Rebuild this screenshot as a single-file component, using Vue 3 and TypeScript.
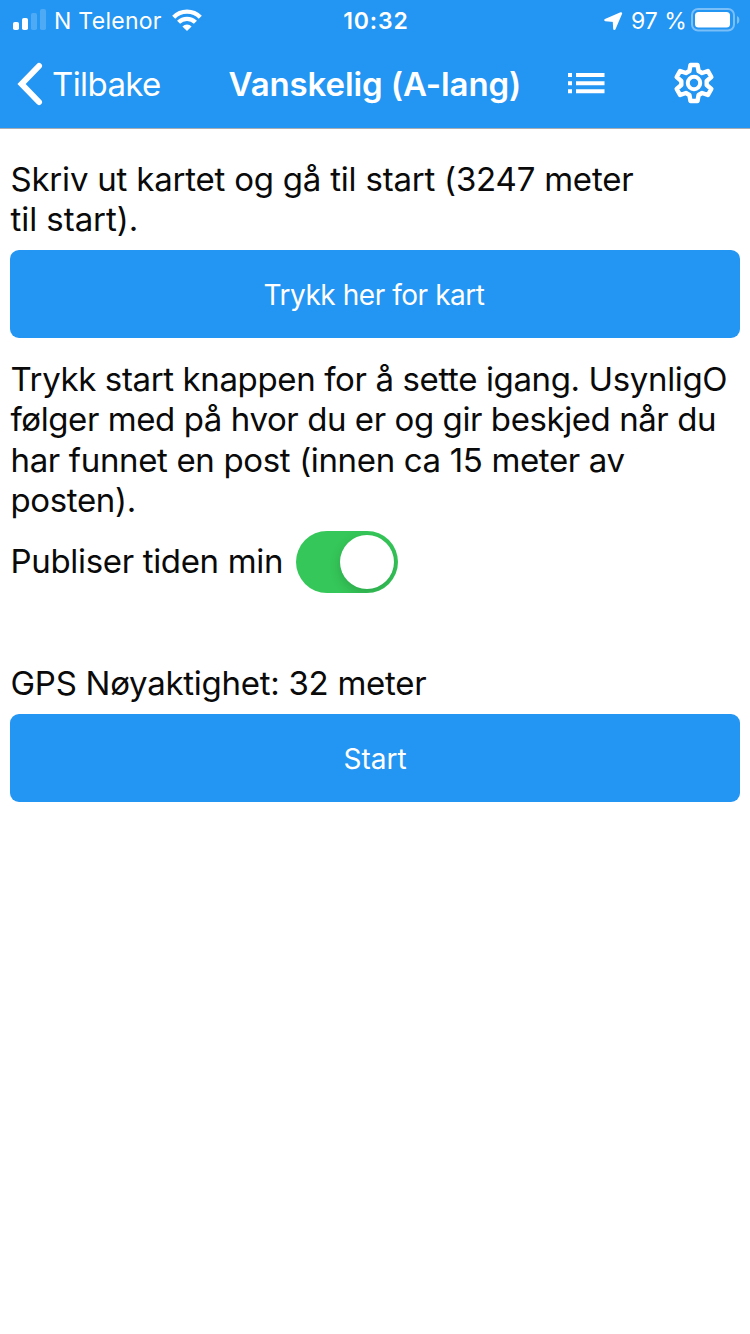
<script setup lang="ts">
import { ref } from 'vue'

const publish = ref(true)
const distance = 3247
const accuracy = 32

// Outline of a six-toothed gear centred on the origin.
const toothProfile: [number, number][] = [
  [-4.6, -12],
  [-3.5, -18],
  [3.5, -18],
  [4.6, -12],
]
const gearPoints: string = Array.from({ length: 6 }, (_, i) => {
  const a = (i * Math.PI) / 3
  return toothProfile
    .map(([x, y]) => {
      const px = x * Math.cos(a) - y * Math.sin(a)
      const py = x * Math.sin(a) + y * Math.cos(a)
      return `${px.toFixed(2)},${py.toFixed(2)}`
    })
    .join(' ')
}).join(' ')
</script>

<template>
  <div class="screen">
    <header class="top">
      <div class="status">
        <div class="status-left">
          <svg class="signal" width="34" height="22" viewBox="0 0 34 22" fill="#fff">
            <rect x="0" y="14" width="6" height="8" rx="1.8" />
            <rect x="9" y="10" width="6" height="12" rx="1.8" />
            <rect x="18" y="5" width="6" height="17" rx="1.8" opacity="0.2" />
            <rect x="27" y="1" width="6" height="21" rx="1.8" opacity="0.2" />
          </svg>
          <span class="carrier">N Telenor</span>
          <svg class="wifi" width="30" height="22" viewBox="0 0 30 22" fill="none" stroke="#fff" stroke-width="4.3">
            <path d="M1.7 8.2a18.7 18.7 0 0 1 26.6 0" />
            <path d="M6.6 13.3a11.8 11.8 0 0 1 16.8 0" />
            <path d="M10.4 17.4a6.4 6.4 0 0 1 9.2 0L15 22z" fill="#fff" stroke="none" />
          </svg>
        </div>
        <span class="clock">10:32</span>
        <div class="status-right">
          <svg class="arrow" width="19" height="19" viewBox="0 0 19 19" fill="#fff" stroke="#fff" stroke-width="2.4" stroke-linejoin="round">
            <path d="M1.4 8 17 1.4 10.4 16.800 9.900 8.900z" />
          </svg>
          <span class="percent">97 %</span>
          <svg class="battery" width="48" height="24" viewBox="0 0 48 24">
            <rect x="1" y="1" width="42" height="21.5" rx="6" fill="none" stroke="#fff" stroke-opacity="0.4" stroke-width="2" />
            <rect x="4" y="4" width="35" height="15.4" rx="3.5" fill="#fff" />
            <path d="M46 8v8c1.6-.7 2.4-2.2 2.4-4S47.6 8.7 46 8z" fill="#fff" fill-opacity="0.4" />
          </svg>
        </div>
      </div>
      <nav class="nav">
        <button class="back" type="button">
          <svg width="27" height="44" viewBox="0 0 27 44" fill="none" stroke="#fff" stroke-width="6" stroke-linecap="round">
            <path d="M22 4 4.6 22 22 40" />
          </svg>
          <span class="back-text">Tilbake</span>
        </button>
        <h1 class="title">Vanskelig (A-lang)</h1>
        <div class="actions">
          <svg class="list" width="37" height="21" viewBox="0 0 37 21" fill="#fff">
            <path d="M0 0h4v4H0zM8 0h28.5v4H8zM0 8.2h4v4H0zM8 8.2h28.5v4H8zM0 16.3h4v4H0zM8 16.3h28.5v4H8z" />
          </svg>
          <svg class="gear" width="42" height="42" viewBox="-21 -21 42 42" fill="none" stroke="#fff" stroke-linejoin="round">
            <polygon :points="gearPoints" stroke-width="4.4" />
            <circle r="6.2" stroke-width="4" />
          </svg>
        </div>
      </nav>
    </header>

    <main class="content">
      <p class="text">
        <span class="line l1">Skriv ut kartet og gå til start ({{ distance }} meter</span>
        <span class="line l2">til start).</span>
      </p>
      <button class="action" type="button"><span class="action-map">Trykk her for kart</span></button>
      <p class="text instructions">
        <span class="line l3">Trykk start knappen for å sette igang. UsynligO</span>
        <span class="line l4">følger med på hvor du er og gir beskjed når du</span>
        <span class="line l5">har funnet en post (innen ca 15 meter av</span>
        <span class="line l6">posten).</span>
      </p>
      <div class="publish">
        <span class="line l7">Publiser tiden min</span>
        <button
          class="switch"
          :class="{ on: publish }"
          type="button"
          role="switch"
          :aria-checked="publish"
          @click="publish = !publish"
        >
          <span class="knob"></span>
        </button>
      </div>
      <p class="text accuracy"><span class="line l8">GPS Nøyaktighet: {{ accuracy }} meter</span></p>
      <button class="action" type="button"><span class="action-start">Start</span></button>
    </main>
  </div>
</template>

<style>
body {
  margin: 0;
  background: #fff;
}
</style>

<style scoped>
.screen {
  width: 750px;
  height: 1334px;
  overflow: hidden;
  background: #fff;
  color: #0a0a0a;
  font-family: Inter, 'Liberation Sans', sans-serif;
}
button {
  border: 0;
  padding: 0;
  font: inherit;
  color: inherit;
  background: none;
}
svg {
  display: block;
  flex: none;
  overflow: visible;
}
.top {
  box-sizing: border-box;
  height: 129px;
  background: #2395f3;
  border-bottom: 1px solid #a8adb3;
  color: #fff;
}
.status {
  display: grid;
  grid-template-columns: 1fr auto 1fr;
  height: 40px;
  padding: 0 11px 0 13px;
  font-size: 23px;
  line-height: 42px;
  white-space: nowrap;
}
.status-left,
.status-right {
  display: flex;
}
.status-right {
  justify-content: flex-end;
}
.signal {
  margin-top: 8px;
}
.carrier {
  width: 118px;
  margin-left: 7px;
  letter-spacing: 0.28px;
}
.wifi {
  margin-top: 9px;
}
.clock {
  font-weight: 600;
  letter-spacing: 0.9px;
}
.arrow {
  margin-top: 12px;
}
.percent {
  width: 60px;
  margin-left: 8px;
}
.battery {
  margin-top: 8px;
}
.nav {
  display: flex;
  height: 88px;
  line-height: 88px;
  white-space: nowrap;
}
.back {
  display: flex;
  align-items: center;
  width: 228.6px;
  padding-left: 17px;
}
.back-text {
  margin-left: 8px;
  font-size: 33px;
  letter-spacing: -0.6px;
}
.title {
  width: 339.4px;
  margin: 0;
  font-size: 33px;
  font-weight: 600;
  letter-spacing: -0.1px;
}
.actions {
  display: flex;
  align-items: center;
  height: 86px;
  gap: 68px;
}
.content {
  padding: 30px 10px 0;
}
.text {
  margin: 0;
}
.line {
  display: block;
  box-sizing: border-box;
  padding-left: 0.5px;
  font-size: 33px;
  line-height: 40.4px;
  white-space: nowrap;
}
.l1 {
  letter-spacing: -0.21px;
}
.l2 {
  letter-spacing: -0.05px;
}
.l3 {
  letter-spacing: -0.37px;
}
.l4 {
  letter-spacing: -0.42px;
}
.l5 {
  letter-spacing: -0.35px;
}
.l6 {
  letter-spacing: -0.35px;
}
.l7 {
  width: 286px;
  margin-bottom: 2px;
  letter-spacing: -0.33px;
}
.l8 {
  letter-spacing: -0.27px;
}
.action {
  display: flex;
  justify-content: center;
  width: 730px;
  height: 88px;
  margin-top: 10px;
  border-radius: 9px;
  background: #2395f3;
  color: #fff;
  font-size: 28px;
  line-height: 90px;
}
.action-map {
  padding-right: 2px;
  letter-spacing: -0.45px;
}
.instructions {
  margin-top: 21px;
}
.publish {
  display: flex;
  align-items: center;
  height: 62px;
  margin-top: 11px;
}
.switch {
  display: flex;
  justify-content: flex-start;
  box-sizing: border-box;
  width: 102px;
  height: 62px;
  padding: 4px;
  border-radius: 31px;
  background: #e9e9eb;
  overflow: hidden;
}
.switch.on {
  justify-content: flex-end;
  background: #35c759;
}
.knob {
  width: 54px;
  height: 54px;
  border-radius: 50%;
  background: #fff;
  box-shadow: 0 4px 12px rgba(0, 0, 0, 0.16);
}
.accuracy {
  margin-top: 70px;
}
</style>
